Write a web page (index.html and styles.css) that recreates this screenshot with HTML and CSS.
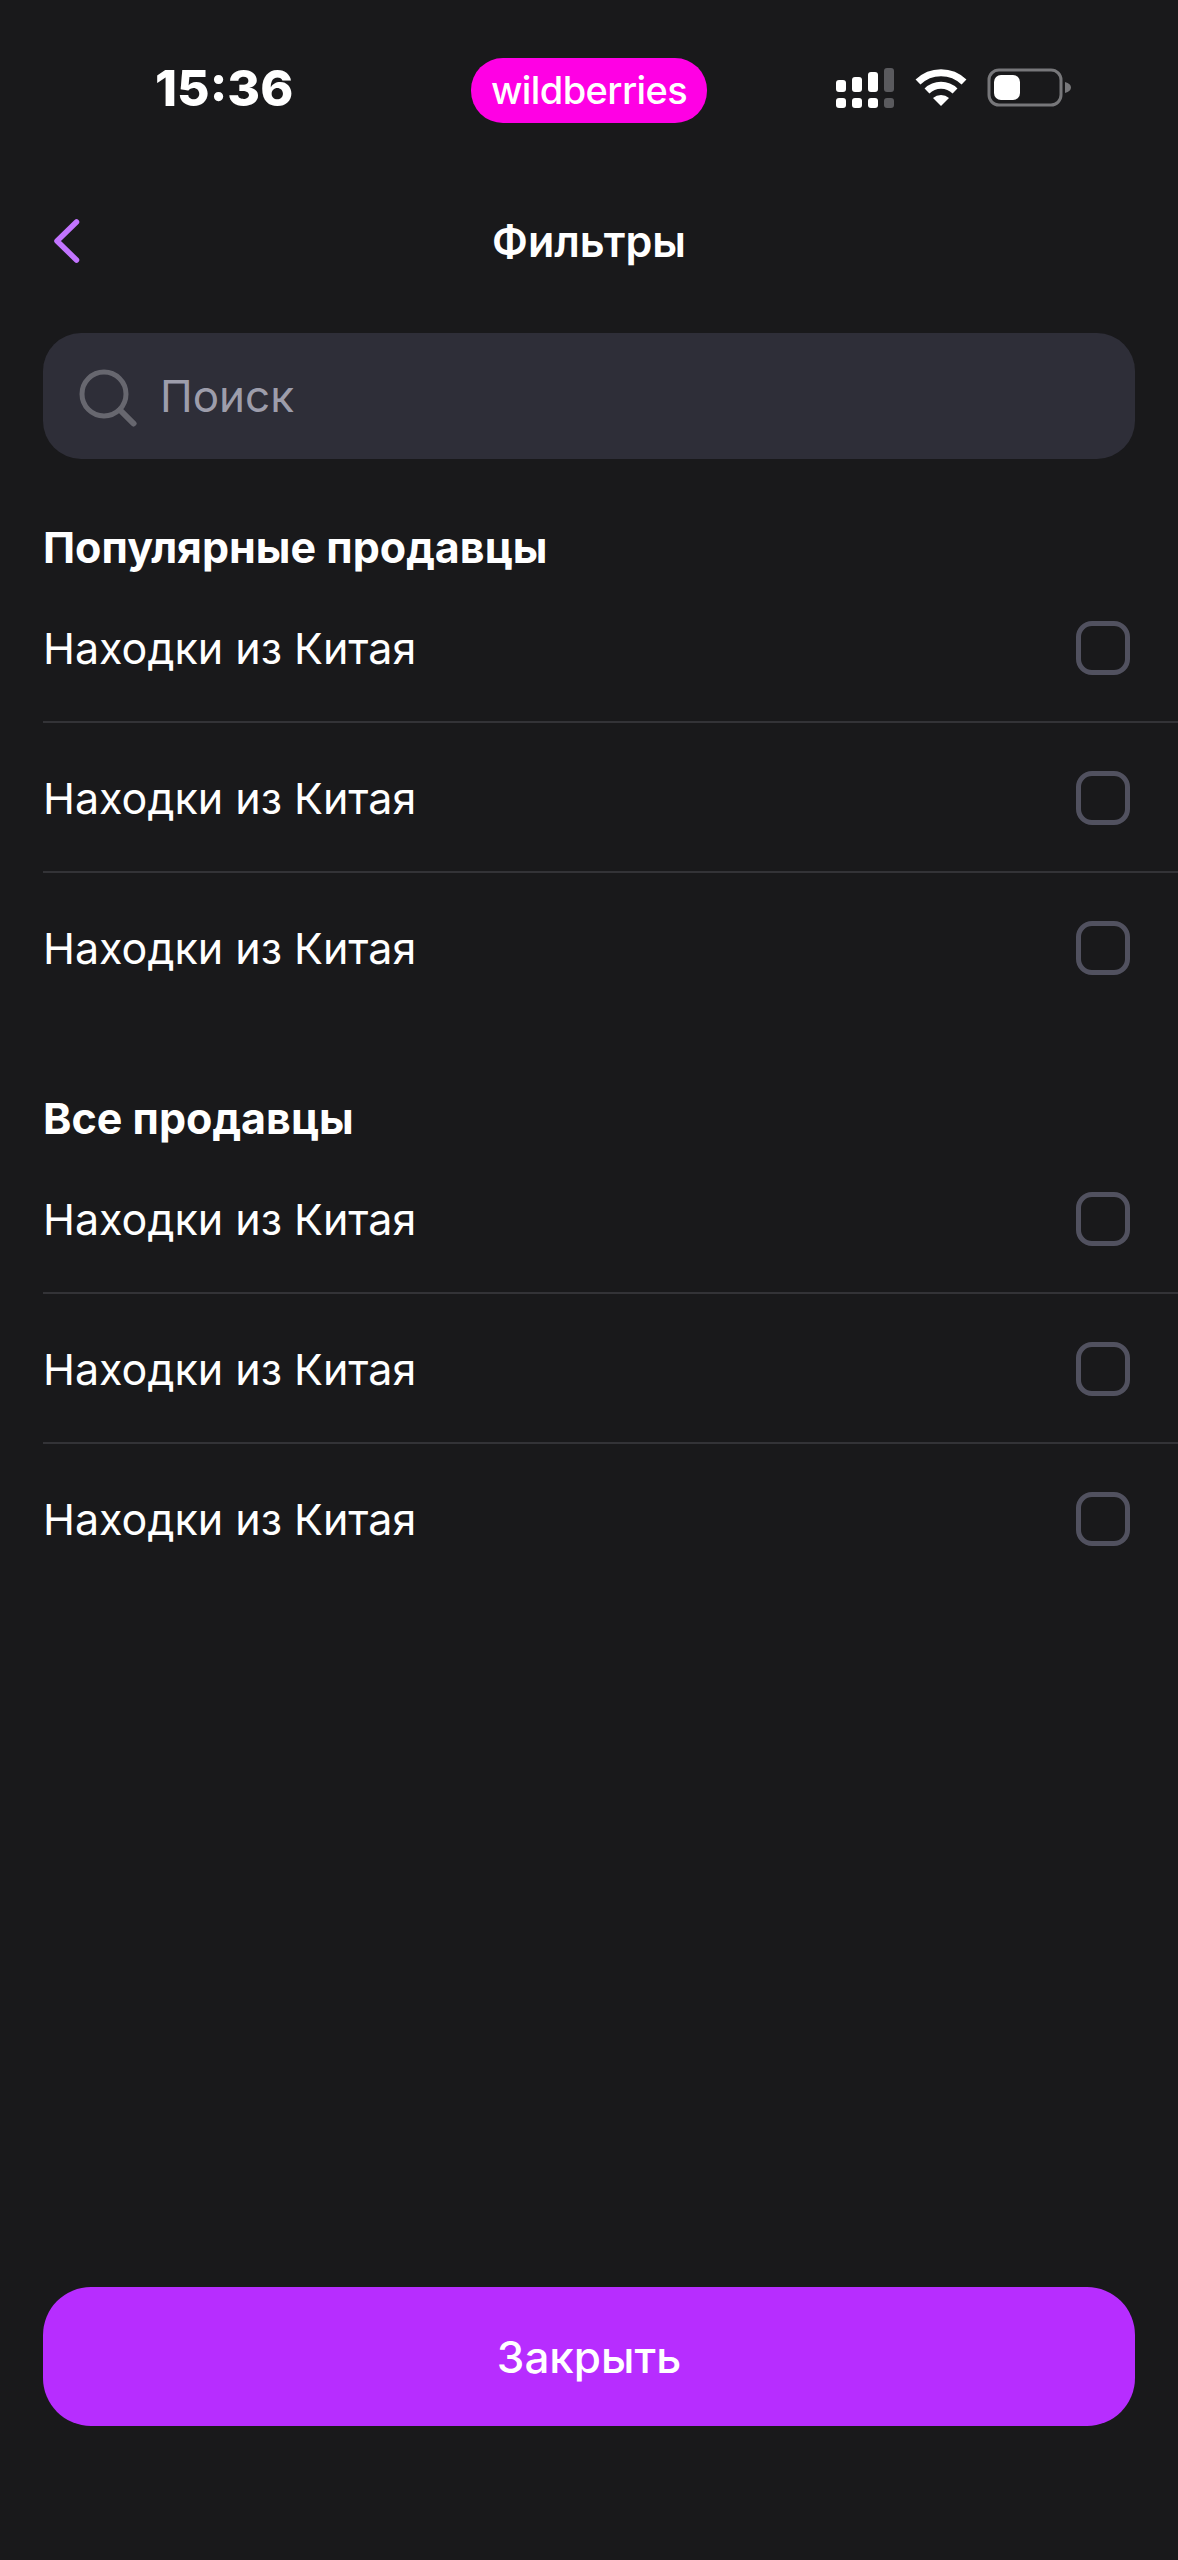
FILE: index.html
```html
<!DOCTYPE html>
<html lang="ru">
<head>
<meta charset="utf-8">
<title>Фильтры</title>
<link rel="stylesheet" href="styles.css">
</head>
<body>
<div class="screen">
  <div class="status">
    <span class="time">15:36</span>
    <span class="brand">wildberries</span>
    <div class="status-icons">
      <svg class="signal" width="60" height="40" viewBox="0 0 60 40">
        <g fill="#fff">
          <rect x="1" y="12" width="10" height="12" rx="3"/><rect x="17" y="9" width="10" height="15" rx="3"/><rect x="33" y="4" width="10" height="20" rx="3"/>
          <rect x="1" y="30" width="10" height="10" rx="3"/><rect x="17" y="30" width="10" height="10" rx="3"/><rect x="33" y="30" width="10" height="10" rx="3"/>
        </g>
        <g fill="#5a5a5e"><rect x="49" y="0" width="10" height="24" rx="3"/><rect x="49" y="30" width="10" height="10" rx="3"/></g>
      </svg>
      <svg class="wifi" width="52" height="38" viewBox="0 0 52 38">
        <path d="M3 13 A33 33 0 0 1 49 13" fill="none" stroke="#fff" stroke-width="7"/>
        <path d="M12 22 A20 20 0 0 1 40 22" fill="none" stroke="#fff" stroke-width="7"/>
        <path d="M18 29 A12 12 0 0 1 34 29 L26 37 Z" fill="#fff"/>
      </svg>
      <svg class="battery" width="84" height="40" viewBox="0 0 84 40">
        <rect x="2" y="2" width="72" height="35" rx="10" fill="none" stroke="#77777a" stroke-width="3"/>
        <rect x="7" y="7" width="26" height="25" rx="7" fill="#fff"/>
        <path d="M78 14 C82 15 84 17 84 19.500 C84 22 82 24 78 25 Z" fill="#77777a"/>
      </svg>
    </div>
  </div>

  <header class="nav">
    <svg class="back" width="30" height="46" viewBox="0 0 30 46"><path d="M23.500 4 L4 23 L23.500 42" fill="none" stroke="#c274ff" stroke-width="5.500" stroke-linecap="round" stroke-linejoin="round"/></svg>
    <h1 class="title">Фильтры</h1>
  </header>

  <div class="search">
    <svg width="58" height="58" viewBox="0 0 58 58"><circle cx="25" cy="25" r="22" fill="none" stroke="#67676f" stroke-width="5"/><path d="M41 41 L54.500 54.500" stroke="#67676f" stroke-width="6" stroke-linecap="round"/></svg>
    <span class="placeholder">Поиск</span>
  </div>

  <section class="group first">
    <h2 class="group-title">Популярные продавцы</h2>
    <div class="row"><span>Находки из Китая</span><i class="check"></i></div>
    <div class="row"><span>Находки из Китая</span><i class="check"></i></div>
    <div class="row"><span>Находки из Китая</span><i class="check"></i></div>
  </section>

  <section class="group second">
    <h2 class="group-title">Все продавцы</h2>
    <div class="row"><span>Находки из Китая</span><i class="check"></i></div>
    <div class="row"><span>Находки из Китая</span><i class="check"></i></div>
    <div class="row"><span>Находки из Китая</span><i class="check"></i></div>
  </section>

  <button class="close">Закрыть</button>
</div>
</body>
</html>
```

FILE: styles.css
```css
* { box-sizing: border-box; }
html, body { margin: 0; padding: 0; background: #19191b; }
.screen {
  width: 1178px;
  height: 2560px;
  background: #19191b;
  color: #fff;
  font-family: Inter, "Liberation Sans", sans-serif;
  display: flex;
  flex-direction: column;
}
.status {
  height: 150px;
  display: flex;
  align-items: center;
  padding: 30px 0 0 155px;
  flex: none;
}
.time { font-size: 50px; font-weight: 800; width: 316px; line-height: 1; margin-top: -5px; }
.brand {
  width: 236px;
  height: 65px;
  border-radius: 32px;
  background: #ff00e4;
  font-family: Inter, sans-serif;
  font-size: 38px;
  font-weight: 500;
  letter-spacing: -0.6px;
  display: flex;
  align-items: center;
  justify-content: center;
  flex: none;
}
.status-icons { display: flex; align-items: center; margin-left: 128px; gap: 20px; margin-top: -5px; }
.status-icons svg { display: block; flex: none; }
.nav {
  height: 62px;
  margin-top: 60px;
  padding-left: 53px;
  display: flex;
  align-items: center;
  flex: none;
}
.back { display: block; }
.title {
  margin: 0 0 0 -83px;
  font-size: 43px;
  font-weight: 600;
  flex: 1;
  text-align: center;
  line-height: 1;
}
.search {
  margin: 61px 43px 0;
  height: 126px;
  border-radius: 38px;
  background: #2e2e38;
  display: flex;
  align-items: center;
  padding-left: 36px;
  gap: 23px;
  flex: none;
}
.search svg { display: block; margin-top: 4px; }
.placeholder { font-size: 44px; color: #9d9dab; }
.group { padding-left: 43px; flex: none; }
.first { margin-top: 64px; }
.second { margin-top: 71px; }
.group-title { margin: 0 0 2px; font-size: 43px; line-height: 48px; font-weight: 700; }
.row {
  height: 150px;
  display: flex;
  align-items: center;
  justify-content: space-between;
  padding: 2px 48px 0 0;
  border-bottom: 2px solid #333337;
  font-size: 43px;
}
.row:last-child { border-bottom-color: transparent; }
.check {
  width: 54px;
  height: 54px;
  border: 5px solid #51515f;
  border-radius: 16px;
  flex: none;
}
.close {
  margin: auto 43px 134px;
  height: 139px;
  border: 0;
  border-radius: 48px;
  background: #b72dff;
  color: #fff;
  font: 500 44px Inter, "Liberation Sans", sans-serif;
  flex: none;
}
```
